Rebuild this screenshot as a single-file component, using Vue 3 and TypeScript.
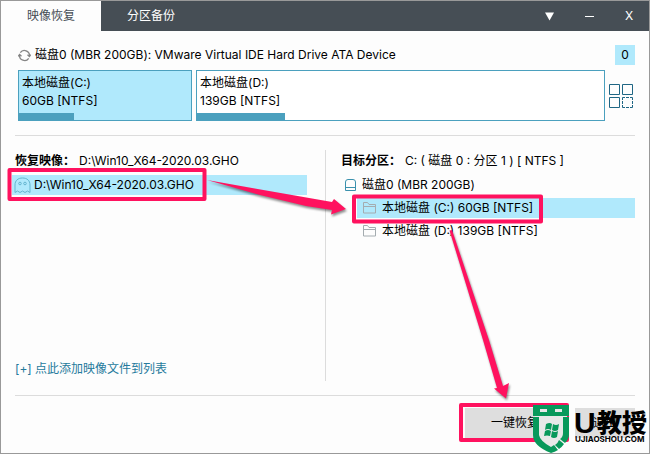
<script setup lang="ts">
import { computed, ref } from 'vue'

interface Partition {
  id: string
  mapName: string
  treeName: string
  size: string
  share: number
  used: number
}

const partitions: Partition[] = [
  { id: 'c', mapName: '本地磁盘(C:)', treeName: '本地磁盘 (C:)', size: '60GB [NTFS]', share: 174, used: 32 },
  { id: 'd', mapName: '本地磁盘(D:)', treeName: '本地磁盘 (D:)', size: '139GB [NTFS]', share: 409, used: 21.5 },
]
const mapColumns = computed(() => partitions.map((p) => `${p.share}fr`).join(' '))
const image = 'D:\\Win10_X64-2020.03.GHO'
const selected = ref('c')
const tab = ref('restore')
</script>

<template>
  <div class="window">
    <header class="titlebar">
      <nav class="tabs">
        <button type="button" class="tab" :class="{ active: tab === 'restore' }" @click="tab = 'restore'">映像恢复</button>
        <button type="button" class="tab" :class="{ active: tab === 'backup' }" @click="tab = 'backup'">分区备份</button>
      </nav>
      <div class="controls">
        <button type="button" class="control" aria-label="菜单">
          <svg width="9" height="9" viewBox="0 0 9 9"><path d="M0 0.500H9L4.500 8.500Z" fill="#fff" /></svg>
        </button>
        <button type="button" class="control" aria-label="最小化">
          <svg width="9" height="9" viewBox="0 0 9 9"><path d="M0 4.500H9" stroke="#fff" /></svg>
        </button>
        <button type="button" class="control">X</button>
      </div>
    </header>

    <main class="content">
      <div class="disk-head">
        <svg width="13" height="13" viewBox="0 0 13 13" fill="none" stroke="#858585" stroke-width="1.300">
          <path d="M2.300 3.700A5 5 0 0 1 11.400 7M10.700 9.300A5 5 0 0 1 1.600 6" />
          <path d="M9.500 5.700L11.400 7.500L12.800 5.600M0.200 7.400L1.600 5.500L3.500 7.300" />
        </svg>
        <span>磁盘0 (MBR 200GB): VMware Virtual IDE Hard Drive ATA Device</span>
        <button type="button" class="disk-number">0</button>
      </div>

      <div class="disk-map">
        <div class="partitions" :style="{ gridTemplateColumns: mapColumns }">
          <button
            v-for="p in partitions"
            :key="p.id"
            type="button"
            class="partition"
            :class="{ chosen: selected === p.id }"
            @click="selected = p.id"
          >
            <span>{{ p.mapName }}</span>
            <span>{{ p.size }}</span>
            <span class="usage" :style="{ width: p.used + '%' }"></span>
          </button>
        </div>
        <button type="button" class="grid-button" aria-label="分区工具">
          <svg width="24" height="24" viewBox="0 0 24 24" fill="none" stroke="#1f6684">
            <path d="M.5 .5h10v10h-10zM13.500 .5h10v10h-10zM.5 13.500h10v10h-10z" />
            <path d="M13.500 16v-2.500h2.500M17 13.500h3M21 13.500h2.500v2.500M23.500 17v3M23.500 21v2.500h-2.500M20 23.500h-3M16 23.500h-2.500v-2.500M13.500 20v-3" />
          </svg>
        </button>
      </div>

      <div class="columns">
        <section class="column">
          <h2 class="heading"><b>恢复映像：</b>{{ image }}</h2>
          <button type="button" class="image-row">
            <svg width="17" height="17" viewBox="0 0 17 17" fill="none" stroke="#65b5cf">
              <path d="M1 15.500V8C1 3.500 4 1 8.500 1S16 3.500 16 8V15.500L13.500 14L11 15.500L8.500 14L6 15.500L3.500 14Z" />
              <circle cx="6" cy="6.500" r="1.300" /><circle cx="11" cy="6.500" r="1.300" />
            </svg>
            {{ image }}
          </button>
          <a class="add-link" href="#">[+] 点此添加映像文件到列表</a>
        </section>
        <section class="column target">
          <h2 class="heading"><b>目标分区：</b>C: ( 磁盘 0 : 分区 1 ) [ NTFS ]</h2>
          <div class="disk-row">
            <svg width="11" height="12" viewBox="0 0 11 12" fill="none" stroke="#3b91ad">
              <path d="M.5 11.500V3Q.5 .5 3 .5H8Q10.500 .5 10.500 3V11.500ZM.5 8.500H10.500" />
            </svg>
            磁盘0 (MBR 200GB)
          </div>
          <ul class="tree">
            <li v-for="p in partitions" :key="p.id">
              <button type="button" class="tree-row" :class="{ chosen: selected === p.id }" @click="selected = p.id">
                <svg width="13" height="12" viewBox="0 0 13 12" fill="none" stroke="#a4acb0">
                  <path d="M.5 11V.5H4.500L6 2.500H12.500V11ZM.5 4.500H12.500" />
                </svg>
                {{ p.treeName }} {{ p.size }}
              </button>
            </li>
          </ul>
        </section>
      </div>

      <footer class="actions">
        <button type="button" class="action primary">一键恢复</button>
        <button type="button" class="action">退出</button>
      </footer>
    </main>

    <svg class="guide" width="650" height="454" viewBox="0 0 650 454" aria-hidden="true">
      <g fill="none" stroke="#ff125f" stroke-width="4" stroke-linejoin="round">
        <rect x="9.500" y="170" width="195" height="29" />
        <rect x="354" y="196.500" width="187" height="25" />
        <rect x="461" y="405" width="106" height="35" />
      </g>
      <g class="arrows" fill="#ff125f">
        <path d="M207 180L332 202L334 199L346 209L331 214.500L332 210L306 206L260 195Z" />
        <path d="M449.500 230.500L452 230L489 340L503 386L509 383L506 398.500L494 388.500L497 388L483 340Z" />
      </g>
    </svg>

    <svg class="brand" width="116" height="50" viewBox="0 0 116 50" role="img">
      <path d="M2 2H34V32Q34 38 18 45Q2 38 2 32Z" fill="#e7e9e8" />
      <path d="M0 1H36V12H0ZM7 5V8H14V5ZM22 5V8H29V5Z" fill="#08995b" fill-rule="evenodd" />
      <path d="M0 13H6V31Q7 37 18 43L21 41L25 46Q22 48 18 49Q0 42 0 31ZM30 13H36V31Q36 35 32 39L27 35Q30 33 30 29ZM26 36L31 40Q29 43 26 45L22 41Q25 39 26 36Z" fill="#08995b" />
      <path d="M13 20Q17 18 19 20L18 26Q15 24 12 26ZM20 20Q23 22 26 20L25 26Q22 28 19 26ZM12 27Q15 25 18 27L17 32Q14 31 11 32ZM19 27Q22 29 25 27L24 33Q21 35 18 33Z" fill="#08995b" />
      <g class="brand-text">
        <text class="brand-u" x="41" y="29">U</text>
        <text class="brand-name" x="64" y="28">教授</text>
        <text class="brand-site" x="42" y="38">UJIAOSHOU.COM</text>
      </g>
    </svg>
  </div>
</template>

<style>
body {
  margin: 0;
}
</style>

<style scoped>
.window {
  position: relative;
  display: flex;
  flex-direction: column;
  box-sizing: border-box;
  min-height: 100vh;
  border: 1px solid #999;
  background: #fdfdfd;
  color: #000;
  font: 12px/18px Inter, "Noto Sans CJK SC", sans-serif;
}
button {
  margin: 0;
  padding: 0;
  border: 0;
  background: none;
  color: inherit;
  font: inherit;
  text-align: left;
}
svg {
  flex: none;
}
.titlebar {
  display: flex;
  justify-content: space-between;
  height: 30px;
  background: #464e55;
  color: #fff;
}
.tabs,
.controls {
  display: flex;
}
.tab {
  padding: 0 26px;
}
.tab.active {
  background: #fdfdfd;
  color: #464e55;
}
.control {
  display: grid;
  place-items: center;
  width: 40px;
}
.content {
  display: flex;
  flex: 1;
  flex-direction: column;
  padding: 14px 14px 15px;
}
.disk-head {
  display: flex;
  align-items: center;
  gap: 4px;
  height: 20px;
  padding-left: 3px;
}
.disk-number {
  width: 20px;
  height: 20px;
  margin-left: auto;
  background: #b0e9fc;
  text-align: center;
}
.disk-map {
  display: flex;
  align-items: center;
  gap: 4px;
  margin-top: 5px;
  padding: 0 2px 14px 3px;
  border-bottom: 1px solid #dcdcdc;
}
.partitions {
  display: grid;
  flex: 1;
  gap: 4px;
}
.partition {
  position: relative;
  display: flex;
  flex-direction: column;
  box-sizing: border-box;
  height: 51px;
  padding: 3px;
  border: 1px solid #4ba0be;
  background: #fff;
}
.partition.chosen {
  background: #b0e9fc;
}
.usage {
  position: absolute;
  bottom: 0;
  left: 0;
  height: 7px;
  background: #4ba0be;
}
.grid-button {
  display: flex;
}
.columns {
  display: grid;
  flex: 1;
  grid-template-columns: 1fr 1fr;
  margin-top: 14px;
  padding-bottom: 14px;
  border-bottom: 1px solid #dcdcdc;
}
.column {
  display: flex;
  flex-direction: column;
}
.target {
  padding-left: 15px;
  border-left: 1px solid #dcdcdc;
}
.heading {
  margin: 0 0 4px;
  font-size: 12px;
  font-weight: 400;
  line-height: 21px;
}
.heading b {
  margin-right: 4px;
}
.image-row {
  display: flex;
  align-items: center;
  gap: 3px;
  height: 20px;
  margin: 0 18px 0 -3px;
  padding-left: 2px;
  background: #b0e9fc;
}
.add-link {
  margin-top: auto;
  color: #257a9c;
  line-height: 24px;
  text-decoration: none;
}
.disk-row {
  display: flex;
  align-items: center;
  gap: 6px;
  height: 20px;
  padding-left: 4px;
}
.tree {
  display: grid;
  gap: 3px;
  margin: 3px 0 0;
  padding: 0 0 0 16px;
  list-style: none;
}
.tree-row {
  display: flex;
  align-items: center;
  gap: 6px;
  width: 100%;
  height: 20px;
  padding-left: 6px;
}
.tree-row.chosen {
  background: #b0e9fc;
}
.actions {
  display: flex;
  justify-content: flex-end;
  gap: 10px;
  margin-top: 12px;
}
.action {
  width: 60px;
  height: 30px;
  background: #dedede;
  text-align: center;
}
.action.primary {
  width: 100px;
}
.guide {
  position: absolute;
  top: -1px;
  left: -1px;
  pointer-events: none;
}
.arrows {
  filter: drop-shadow(1px 2px 1px rgb(0 0 0 / 45%));
}
.brand {
  position: absolute;
  right: 0;
  bottom: -1px;
  pointer-events: none;
}
.brand-text {
  fill: #000;
  font-family: "Liberation Sans", "Noto Sans CJK SC", sans-serif;
  font-weight: 700;
}
.brand-u {
  font-size: 30px;
}
.brand-name {
  font-size: 25px;
  font-weight: 900;
}
.brand-site {
  font-family: Inter, sans-serif;
  font-size: 8px;
}
</style>
